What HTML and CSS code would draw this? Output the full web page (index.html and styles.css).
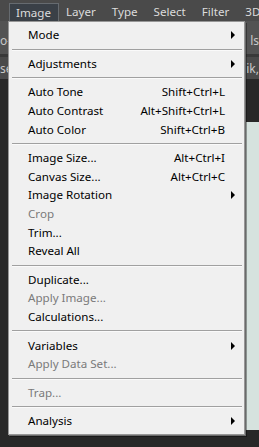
FILE: index.html
```html
<!DOCTYPE html>
<html lang="en">
<head>
    <meta charset="UTF-8">
    <title>Image menu</title>
    <link rel="stylesheet" href="styles.css">
</head>
<body>
    <div class="workspace">
        <div class="menubar">
            <span class="top-item active">Image</span>
            <span class="top-item">Layer</span>
            <span class="top-item">Type</span>
            <span class="top-item">Select</span>
            <span class="top-item">Filter</span>
            <span class="top-item">3D</span>
        </div>
        <div class="options-bar"><span>o-S</span><span>ls</span></div>
        <div class="tab-bar"><span>se</span><span>ik,</span></div>
        <div class="work-area">
            <div class="canvas"></div>
        </div>
    </div>

    <div class="dropdown">
        <div class="item"><span>Mode</span><span class="arrow"></span></div>
        <div class="sep"></div>
        <div class="item"><span>Adjustments</span><span class="arrow"></span></div>
        <div class="sep"></div>
        <div class="item"><span>Auto Tone</span><span class="key">Shift+Ctrl+L</span></div>
        <div class="item"><span>Auto Contrast</span><span class="key">Alt+Shift+Ctrl+L</span></div>
        <div class="item"><span>Auto Color</span><span class="key">Shift+Ctrl+B</span></div>
        <div class="sep"></div>
        <div class="item"><span>Image Size...</span><span class="key">Alt+Ctrl+I</span></div>
        <div class="item"><span>Canvas Size...</span><span class="key">Alt+Ctrl+C</span></div>
        <div class="item"><span>Image Rotation</span><span class="arrow"></span></div>
        <div class="item disabled"><span>Crop</span></div>
        <div class="item"><span>Trim...</span></div>
        <div class="item"><span>Reveal All</span></div>
        <div class="sep"></div>
        <div class="item"><span>Duplicate...</span></div>
        <div class="item disabled"><span>Apply Image...</span></div>
        <div class="item"><span>Calculations...</span></div>
        <div class="sep"></div>
        <div class="item"><span>Variables</span><span class="arrow"></span></div>
        <div class="item disabled"><span>Apply Data Set...</span></div>
        <div class="sep"></div>
        <div class="item disabled"><span>Trap...</span></div>
        <div class="sep"></div>
        <div class="item"><span>Analysis</span><span class="arrow"></span></div>
    </div>
</body>
</html>
```

FILE: styles.css
```css
body {
    margin: 0;
    width: 259px;
    height: 447px;
    overflow: hidden;
    position: relative;
    font-family: "Noto Sans", sans-serif;
    background: #282828;
}
.workspace {
    display: flex;
    flex-direction: column;
    height: 447px;
}
.menubar {
    height: 21px;
    background: #4a4a4a;
    display: flex;
    align-items: flex-end;
    padding-left: 9px;
    white-space: nowrap;
    overflow: hidden;
}
.top-item {
    color: #dcdcdc;
    font-size: 11.6px;
    height: 18px;
    line-height: 17px;
    padding: 0 7px 0 6px;
    margin-right: 3px;
    box-sizing: border-box;
}
.active {
    background: #3a4047;
    border: 1px solid #666b70;
    border-bottom: none;
    margin-right: 1px;
}
.options-bar {
    height: 36px;
    background: #535353;
    border-bottom: 3px solid #393939;
    display: flex;
    justify-content: space-between;
    align-items: center;
    padding-top: 6px;
    box-sizing: border-box;
    color: #c8c8c8;
    font-size: 12px;
}
.tab-bar {
    height: 22px;
    background: #4a4a4a;
    display: flex;
    justify-content: space-between;
    align-items: center;
    color: #c8c8c8;
    font-size: 12px;
}
.work-area {
    flex: 1;
    display: flex;
    justify-content: flex-end;
    padding-top: 43px;
    padding-bottom: 17px;
}
.canvas {
    width: 13px;
    background: #d6e2de;
}
.dropdown {
    position: absolute;
    left: 8px;
    top: 21px;
    width: 235px;
    padding: 4px 0 3px;
    background: #f0f0f0;
    border: 1px solid #979797;
    box-shadow: 1px 1px 0 #6a6a6a, 2px 2px 0 rgba(0,0,0,0.35);
    font-size: 11.6px;
    color: #000;
}
.item {
    height: 18.6px;
    display: flex;
    align-items: center;
    justify-content: space-between;
    padding: 0 19px 0 19px;
    line-height: 18px;
}
.disabled {
    color: #7a7a7a;
}
.arrow {
    width: 0;
    height: 0;
    border-top: 4px solid transparent;
    border-bottom: 4px solid transparent;
    border-left: 4px solid #000;
    margin-right: -10px;
}
.sep {
    height: 1px;
    background: #a0a0a0;
    margin: 4px 2px 4px 3px;
    border-bottom: 1px solid #fafafa;
}
```
